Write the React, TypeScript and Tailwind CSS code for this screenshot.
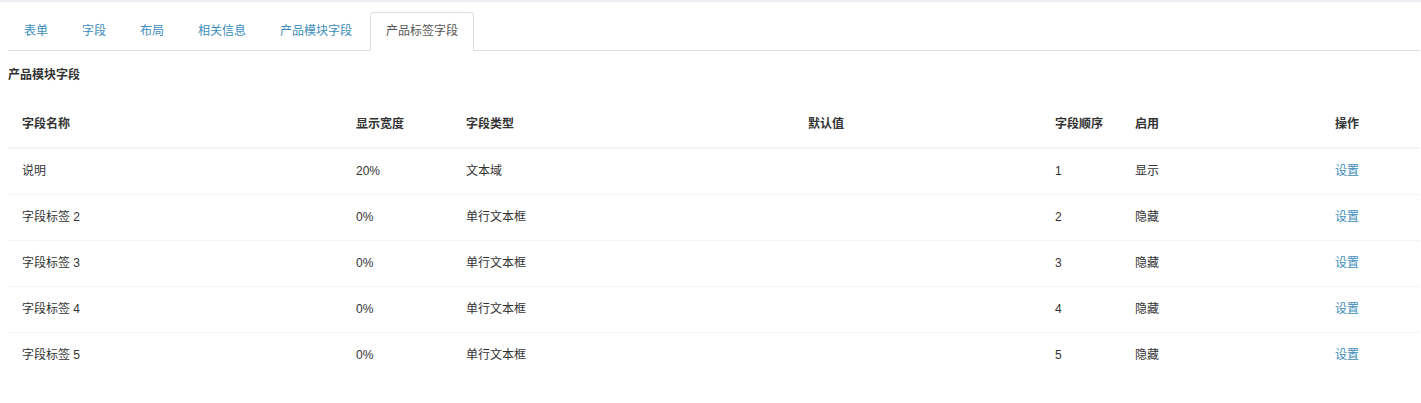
const tabs = ['表单', '字段', '布局', '相关信息', '产品模块字段', '产品标签字段']

interface FieldRow {
  name: string
  width: string
  type: string
  defaultValue: string
  order: number
  enabled: string
}

const rows: FieldRow[] = [
  { name: '说明', width: '20%', type: '文本域', defaultValue: '', order: 1, enabled: '显示' },
  { name: '字段标签 2', width: '0%', type: '单行文本框', defaultValue: '', order: 2, enabled: '隐藏' },
  { name: '字段标签 3', width: '0%', type: '单行文本框', defaultValue: '', order: 3, enabled: '隐藏' },
  { name: '字段标签 4', width: '0%', type: '单行文本框', defaultValue: '', order: 4, enabled: '隐藏' },
  { name: '字段标签 5', width: '0%', type: '单行文本框', defaultValue: '', order: 5, enabled: '隐藏' },
]

export default function App() {
  const active = 5

  return (
    <div
      className="min-h-[403px] bg-white text-[12px] text-[#333]"
      style={{ fontFamily: '"Liberation Sans", "Noto Sans CJK SC", sans-serif' }}
    >
      <div className="h-[2px] bg-[#eceff3]" />

      <div className="pl-[8px] pr-[1px] pt-[10px]">
        {/* Tabs */}
        <ul className="flex border-b border-[#ddd]">
          {tabs.map((t, i) => (
            <li key={t} className="mr-[2px] -mb-px">
              <a
                className={`block px-[15px] py-[10px] leading-[17px] rounded-t-[4px] border ${
                  i === active
                    ? 'border-[#ddd] border-b-white bg-white text-[#555]'
                    : 'border-transparent text-[#3c8dbc]'
                }`}
              >
                {t}
              </a>
            </li>
          ))}
        </ul>

        <h4 className="mt-[15px] mb-[16px] font-bold leading-[18px] text-[#333]">产品模块字段</h4>

        {/* Field table */}
        <table className="w-full border-collapse table-fixed">
          <colgroup>
            <col className="w-[334px]" />
            <col className="w-[110px]" />
            <col className="w-[342px]" />
            <col className="w-[247px]" />
            <col className="w-[80px]" />
            <col className="w-[200px]" />
            <col />
          </colgroup>
          <thead>
            <tr className="h-[48px] border-b-2 border-[#f4f4f4] text-left font-bold">
              <th className="px-[14px]">字段名称</th>
              <th className="px-[14px]">显示宽度</th>
              <th className="px-[14px]">字段类型</th>
              <th className="px-[14px]">默认值</th>
              <th className="px-[14px]">字段顺序</th>
              <th className="px-[14px]">启用</th>
              <th className="px-[14px]">操作</th>
            </tr>
          </thead>
          <tbody>
            {rows.map((r, i) => (
              <tr
                key={r.name}
                className={`h-[46px] ${i < rows.length - 1 ? 'border-b border-[#f4f4f4]' : ''}`}
              >
                <td className="px-[14px]">{r.name}</td>
                <td className="px-[14px]">{r.width}</td>
                <td className="px-[14px]">{r.type}</td>
                <td className="px-[14px]">{r.defaultValue}</td>
                <td className="px-[14px]">{r.order}</td>
                <td className="px-[14px]">{r.enabled}</td>
                <td className="px-[14px]">
                  <a className="text-[#3c8dbc] cursor-pointer">设置</a>
                </td>
              </tr>
            ))}
          </tbody>
        </table>
      </div>
    </div>
  )
}
